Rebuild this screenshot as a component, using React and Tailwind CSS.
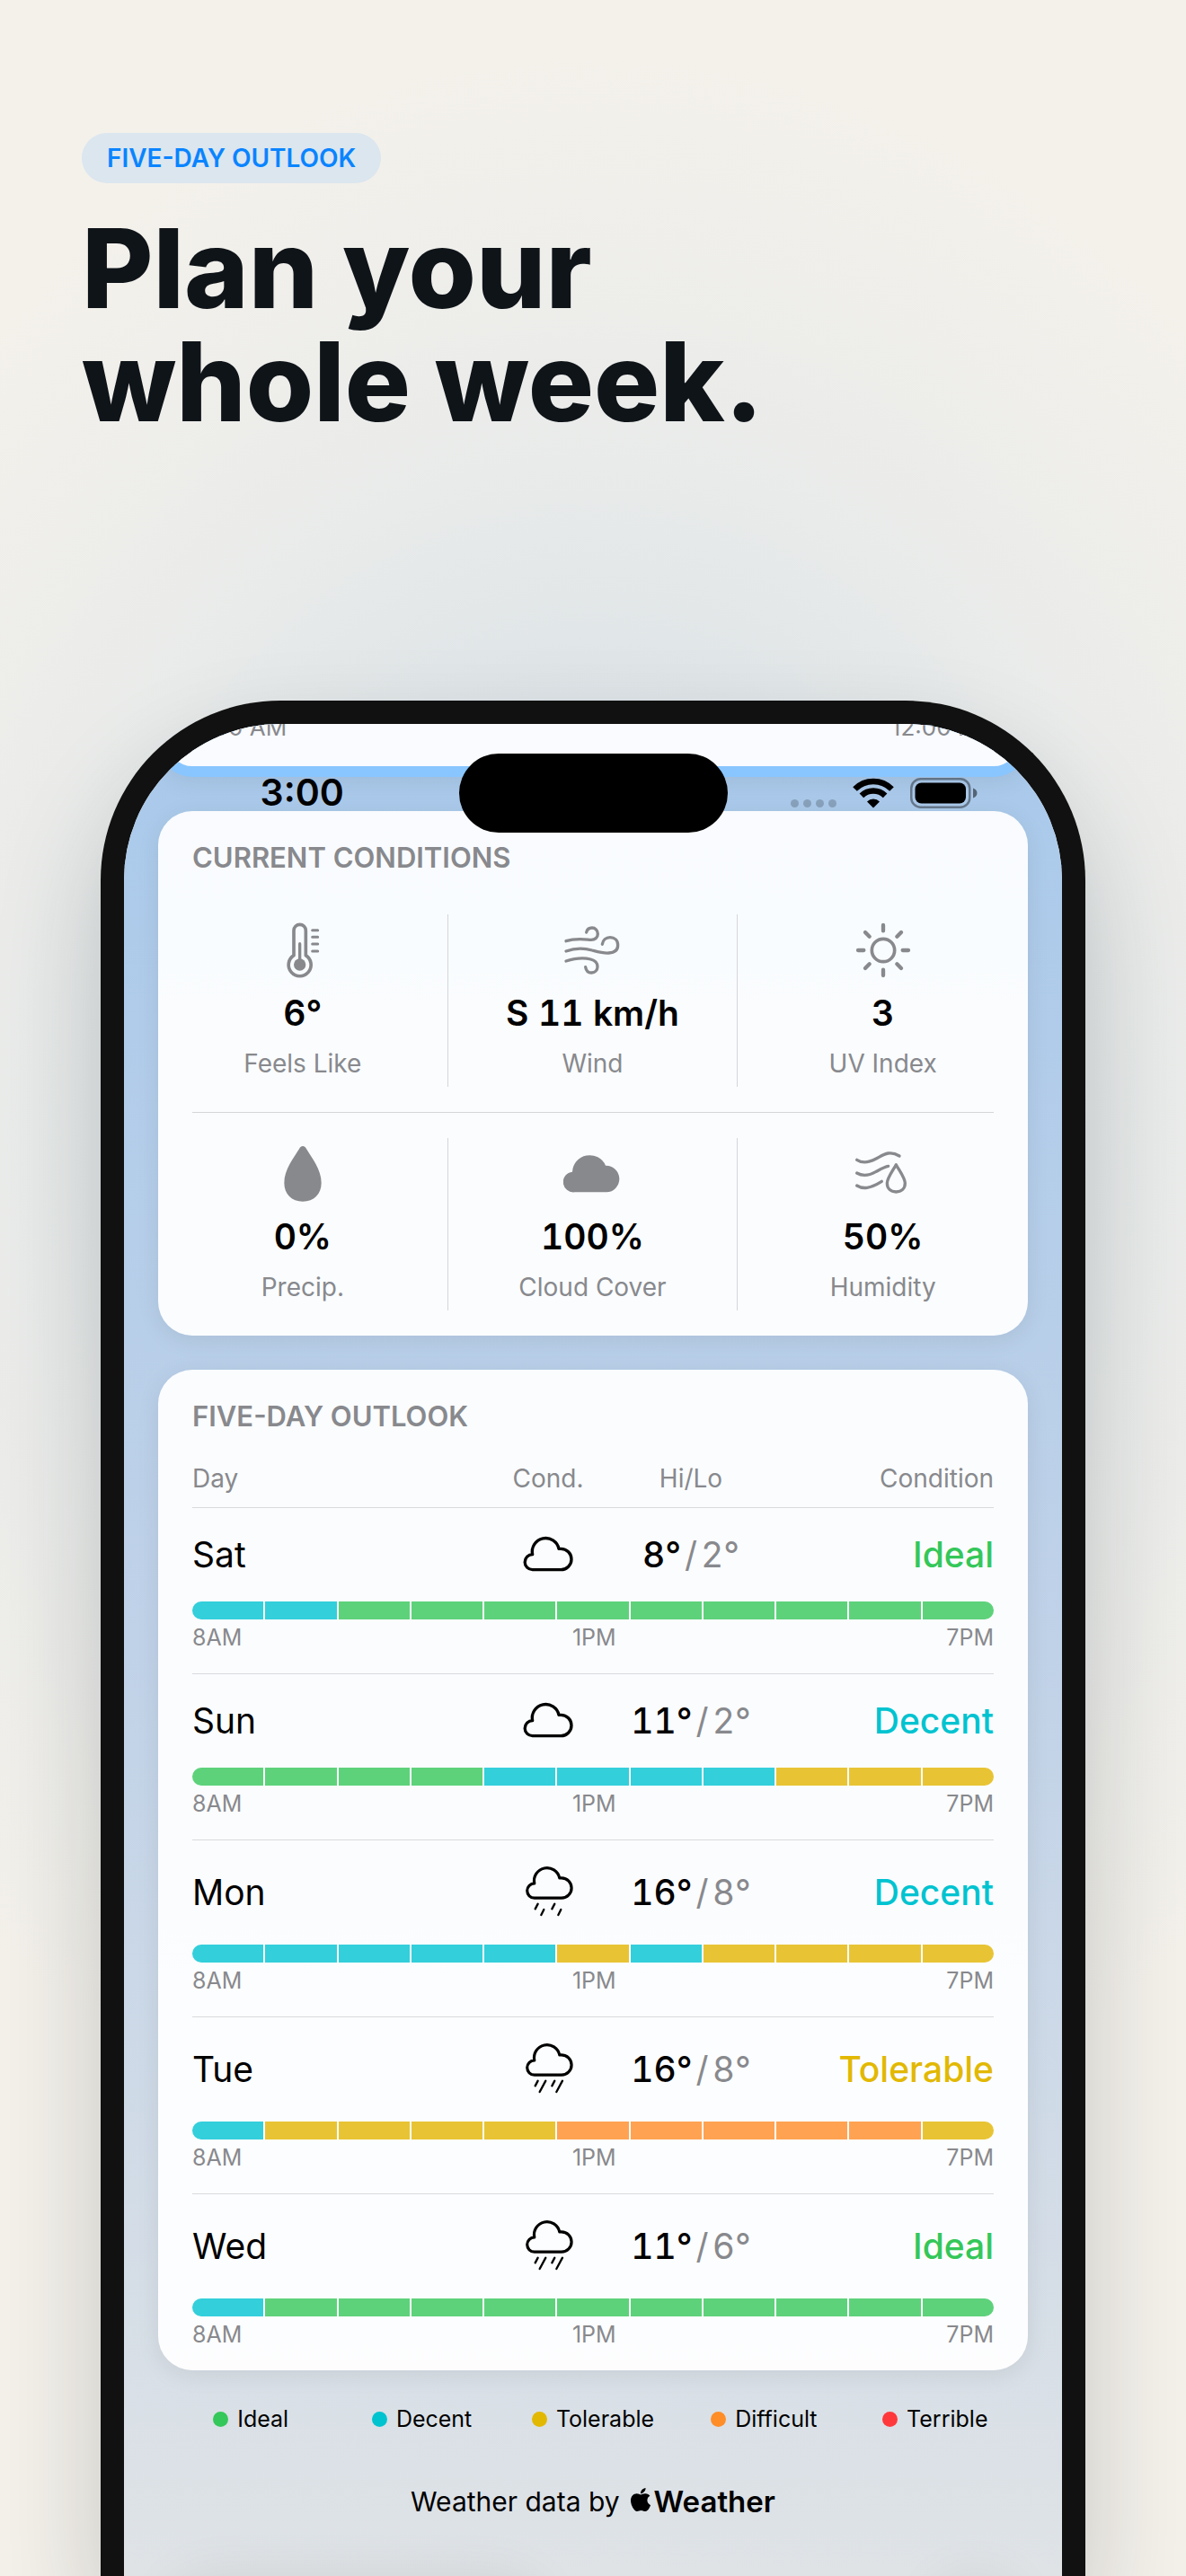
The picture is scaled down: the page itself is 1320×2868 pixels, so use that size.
import { FaApple } from 'react-icons/fa'

const LEVELS = {
    ideal: { label: 'Ideal', text: 'text-[#34c759]', dot: 'bg-[#34c759]', bar: 'bg-[#5dd27b]' },
    decent: { label: 'Decent', text: 'text-[#00c3d0]', dot: 'bg-[#00c3d0]', bar: 'bg-[#33cfdb]' },
    tolerable: { label: 'Tolerable', text: 'text-[#e2b802]', dot: 'bg-[#e2b802]', bar: 'bg-[#e8c434]' },
    difficult: { label: 'Difficult', text: 'text-[#ff8d28]', dot: 'bg-[#ff8d28]', bar: 'bg-[#ffa352]' },
    terrible: { label: 'Terrible', text: 'text-[#ff383c]', dot: 'bg-[#ff383c]', bar: 'bg-[#ff6063]' },
}

// One letter per hour, 8AM to 6PM
const HOUR_CODES = { i: 'ideal', d: 'decent', t: 'tolerable', f: 'difficult', x: 'terrible' }

const DAYS = [
    { day: 'Sat', icon: CloudIcon, hi: 8, lo: 2, level: 'ideal', hours: 'ddiiiiiiiii' },
    { day: 'Sun', icon: CloudIcon, hi: 11, lo: 2, level: 'decent', hours: 'iiiiddddttt' },
    { day: 'Mon', icon: RainIcon, hi: 16, lo: 8, level: 'decent', hours: 'dddddtdtttt' },
    { day: 'Tue', icon: HeavyRainIcon, hi: 16, lo: 8, level: 'tolerable', hours: 'dttttffffft' },
    { day: 'Wed', icon: HeavyRainIcon, hi: 11, lo: 6, level: 'ideal', hours: 'diiiiiiiiii' },
]

const CONDITIONS = [
    [
        { label: 'Feels Like', value: '6°', icon: ThermometerIcon },
        { label: 'Wind', value: 'S 11 km/h', icon: WindIcon },
        { label: 'UV Index', value: '3', icon: SunIcon },
    ],
    [
        { label: 'Precip.', value: '0%', icon: DropIcon },
        { label: 'Cloud Cover', value: '100%', icon: CloudFillIcon },
        { label: 'Humidity', value: '50%', icon: HumidityIcon },
    ],
]

export default function App() {
    return (
        <main className="flex min-h-screen flex-col overflow-hidden bg-[#f4f1eb] bg-[radial-gradient(ellipse_76%_42%_at_50%_44%,#cfdbe3_0%,#dee4e7_40%,#e9ebea_62%,#f4f1eb_100%)] font-['Inter','Liberation_Sans',sans-serif]">
            <header className="flex flex-col items-start px-[91px] pt-[148px]">
                <p className="flex h-14 items-center rounded-full bg-[#dbe6ef] px-7 text-[28px] font-semibold text-[#0a84ff]">
                    FIVE-DAY OUTLOOK
                </p>
                <h1 className="mt-8 text-[122px] leading-[126px] font-extrabold text-[#0f1419]">
                    Plan your
                    <br />
                    whole week.
                </h1>
            </header>
            <Phone />
        </main>
    )
}

function Phone() {
    return (
        <div className="mx-28 mt-[292px] flex grow flex-col rounded-t-[200px] border-[26px] border-b-0 border-[#111111] shadow-[0_60px_120px_rgba(20,28,34,0.2)]">
            <div className="relative grow overflow-hidden rounded-t-[174px] bg-linear-to-b from-[#a9c9eb] via-[#c0d2e8] to-[#dfe3e6] px-[38px]">
                <StatusBar />
                <div className="flex flex-col gap-[38px]">
                    <section className="-mt-12 flex justify-between rounded-[38px] border-12 border-[#89c6ff] bg-[#f9fbff] px-[26px] pt-6 pb-[27px] text-[26px] leading-8 text-[#88898d] shadow-[0_5px_26px_rgba(0,0,0,0.08)]">
                        <span>6:00 AM</span>
                        <span>12:00 PM</span>
                    </section>
                    <CurrentConditions />
                    <Outlook />
                    <Legend />
                </div>
                <p className="mt-[52px] flex items-center justify-center pb-12 text-[30px] leading-12 text-black">
                    Weather data by
                    <a href="#attribution" className="ml-2 flex items-center text-[33px] font-semibold">
                        <FaApple size={30} className="mb-1" />
                        Weather
                    </a>
                </p>
                {/* Tab bar and add button sit just past the fold, only their shadows show */}
                <div className="absolute top-full left-12 h-24 w-[420px] rounded-full shadow-[0_0_60px_rgba(0,0,0,0.07)]" />
                <div className="absolute top-full right-12 size-24 rounded-full shadow-[0_0_60px_rgba(0,0,0,0.07)]" />
            </div>
        </div>
    )
}

function StatusBar() {
    return (
        <div className="absolute inset-x-0 top-[33px] z-10 grid grid-cols-[1fr_299px_1fr] items-center text-black">
            <span className="pl-6 text-center text-[41px] font-semibold">3:00</span>
            <div className="h-[88px] rounded-full bg-black" />
            <div className="flex items-end justify-center gap-[18px] pr-6">
                <div className="flex gap-[5px] pb-px">
                    {[0, 1, 2, 3].map((n) => (
                        <span key={n} className="size-[9px] rounded-full bg-black/20" />
                    ))}
                </div>
                <svg width="46" height="34" viewBox="0 0 46 34" fill="none" stroke="currentColor" strokeWidth="6.5">
                    <path d="M2.5 12.5A29 29 0 0 1 43.5 12.5" />
                    <path d="M9.9 19.9A18.5 18.5 0 0 1 36.1 19.9" />
                    <path d="M23 33.5L16 26.5A9.9 9.9 0 0 1 30 26.5Z" fill="currentColor" stroke="none" />
                </svg>
                <svg width="75" height="34" viewBox="0 0 75 34" fill="currentColor">
                    <rect x="1.25" y="1.25" width="65" height="31.5" rx="10.5" fill="none" stroke="currentColor" strokeWidth="2.5" opacity="0.4" />
                    <rect x="5.5" y="5.5" width="56.5" height="23" rx="7" />
                    <path d="M70 11.5c3 1 4.5 3 4.5 5.5s-1.500 4.500-4.500 5.500z" opacity="0.5" />
                </svg>
            </div>
        </div>
    )
}

function Card({ title, children }) {
    return (
        <section className="rounded-[38px] bg-white/93 pt-[33px] shadow-[0_5px_26px_rgba(0,0,0,0.08)]">
            <h2 className="px-[38px] text-[31px] leading-[38px] font-semibold text-[#88898d]">{title}</h2>
            {children}
        </section>
    )
}

function CurrentConditions() {
    return (
        <Card title="CURRENT CONDITIONS">
            <div className="pt-4">
                {CONDITIONS.map((row, i) => (
                    <div key={i}>
                        {i > 0 && <hr className="mx-[38px] border-[#d4d6da]" />}
                        <dl className="grid grid-cols-3 divide-x divide-[#d4d6da] py-7">
                            {row.map((c) => (
                                <div key={c.label} className="flex flex-col-reverse items-center gap-3 py-2">
                                    <dt className="text-[28px] leading-9 text-[#88898d]">{c.label}</dt>
                                    <dd className="flex flex-col items-center gap-3 text-[39px] leading-[52px] font-semibold text-black tabular-nums">
                                        <c.icon />
                                        {c.value}
                                    </dd>
                                </div>
                            ))}
                        </dl>
                    </div>
                ))}
            </div>
        </Card>
    )
}

function Outlook() {
    return (
        <Card title="FIVE-DAY OUTLOOK">
            <div className="px-[38px] pt-8">
                <table className="w-full table-fixed text-[39px] leading-[52px] text-black">
                    <thead className="text-[28px] leading-9 text-[#88898d]">
                        <tr>
                            <th className="pb-3.5 text-left font-normal">Day</th>
                            <th className="w-26 pb-3.5 font-normal">Cond.</th>
                            <th className="w-[214px] pb-3.5 font-normal">Hi/Lo</th>
                            <th className="w-[230px] pb-3.5 text-right font-normal">Condition</th>
                        </tr>
                    </thead>
                    {DAYS.map((d) => (
                        <DayRows key={d.day} {...d} />
                    ))}
                </table>
            </div>
        </Card>
    )
}

function DayRows({ day, icon: Icon, hi, lo, level, hours }) {
    return (
        <tbody>
            <tr className="border-t border-[#d9dadd]">
                <th className="py-[26px] text-left font-normal">{day}</th>
                <td className="py-[26px]">
                    <Icon />
                </td>
                <td className="py-[26px] text-center whitespace-nowrap tabular-nums">
                    <span className="font-medium">{hi}°</span>
                    <span className="mx-1 text-[#88898d]">/</span>
                    <span className="text-[#88898d]">{lo}°</span>
                </td>
                <td className={`py-[26px] text-right font-medium ${LEVELS[level].text}`}>{LEVELS[level].label}</td>
            </tr>
            <tr>
                <td colSpan={4} className="pb-6">
                    <div className="flex h-5 gap-0.5 overflow-hidden rounded-full">
                        {hours.split('').map((h, i) => (
                            <span key={i} className={`flex-1 ${LEVELS[HOUR_CODES[h]].bar}`} />
                        ))}
                    </div>
                    <div className="mt-1 flex justify-between text-[25px] leading-8 text-[#88898d]">
                        <span>8AM</span>
                        <span>1PM</span>
                        <span>7PM</span>
                    </div>
                </td>
            </tr>
        </tbody>
    )
}

function Legend() {
    return (
        <ul className="grid grid-cols-5 px-2 text-[25px] leading-8 text-black">
            {Object.values(LEVELS).map((l) => (
                <li key={l.label} className="flex items-center justify-center gap-2.5">
                    <span className={`size-[17px] rounded-full ${l.dot}`} />
                    {l.label}
                </li>
            ))}
        </ul>
    )
}

/* Icons */

function Glyph({ viewBox, children }) {
    return (
        <svg
            viewBox={viewBox}
            className="size-16 text-[#88898d]"
            fill="none"
            stroke="currentColor"
            strokeWidth="10"
            strokeLinecap="round"
            strokeLinejoin="round"
        >
            {children}
        </svg>
    )
}

function ThermometerIcon() {
    return (
        <Glyph viewBox="404 141 192 192">
            <path d="M470 171a20 20 0 0 1 40 0V254A37.500 37.500 0 1 1 470 254Z" strokeWidth="11" />
            <path d="M490 215V280" />
            <circle cx="490" cy="285" r="20" fill="currentColor" stroke="none" />
            <path d="M532 170h18M532 193h18M532 216h18M532 240h18" strokeWidth="9" />
        </Glyph>
    )
}

function WindIcon() {
    return (
        <Glyph viewBox="-66 141 192 192">
            <path d="M-57 206C-25 196 0 200 25 202C40 203 49 194 49 182C49 170 40 162 30 162C20 162 13 168 11 177" />
            <path d="M-57 240C-30 230 0 228 30 237C60 245 70 248 86 246C105 245 116 236 116 220C116 204 105 194 90 194C76 194 66 203 64 217" />
            <path d="M-57 273C-25 263 5 262 25 267C42 271 48 282 48 292C48 304 39 312 28 312C18 312 10 305 8 293" />
        </Glyph>
    )
}

function SunIcon() {
    return (
        <Glyph viewBox="904 141 192 192">
            <circle cx="1000" cy="237" r="38" strokeWidth="11" />
            <path
                d="M1000 153v19M1000 302v19M916 237h19M1065 237h19M940 177l14 14M1046 283l14 14M940 297l14-14M1046 191l14-14"
                strokeWidth="13"
            />
        </Glyph>
    )
}

function DropIcon() {
    return (
        <Glyph viewBox="404 889 192 192">
            <path
                d="M500 892c5 0 8 3 10 6C530 932 562 970 562 1015C562 1053 537 1077 500 1077C463 1077 438 1053 438 1015C438 970 470 932 490 898c2-3 5-6 10-6z"
                fill="currentColor"
                stroke="none"
            />
        </Glyph>
    )
}

function CloudFillIcon() {
    return (
        <Glyph viewBox="-66 889 192 192">
            <path
                d="M-29 1046A34 34 0 0 1-36 978A58 58 0 0 1 75 957A44.500 44.500 0 0 1 78 1046Z"
                fill="currentColor"
                stroke="none"
            />
        </Glyph>
    )
}

function HumidityIcon() {
    return (
        <Glyph viewBox="904 889 192 192">
            <path d="M912 938C930 950 950 948 975 935C1000 922 1020 904 1054 925" />
            <path d="M912 982C932 994 950 992 975 978C995 967 1005 961 1017 959" />
            <path d="M912 1024C932 1036 955 1035 995 1010" />
            <path d="M1043 954C1035 970 1013 998 1013 1016C1013 1034 1025 1045 1043 1045C1061 1045 1073 1034 1073 1016C1073 998 1051 970 1043 954Z" />
        </Glyph>
    )
}

const CLOUD = 'M1268 713A25 25 0 0 1 1268 662A44.500 44.500 0 0 1 1356 643H1363A35 35 0 0 1 1363 713Z'

function CloudIcon() {
    return (
        <svg viewBox="1224 585 192 156" className="mx-auto h-[52px] w-16" fill="none" stroke="currentColor" strokeWidth="10" strokeLinejoin="round">
            <path d={CLOUD} />
        </svg>
    )
}

function Rain({ drops }) {
    return (
        <svg viewBox="0 0 192 192" className="mx-auto size-16" fill="none" stroke="currentColor" strokeLinecap="round" strokeLinejoin="round">
            <path d={CLOUD} transform="translate(-1158 -565) scale(0.953)" strokeWidth="10" />
            <path d={drops} strokeWidth="7" />
        </svg>
    )
}

function RainIcon() {
    return <Rain drops="M62 134L53 151M82 153L73 171M118 134L109 151M139 153L130 171" />
}

function HeavyRainIcon() {
    return <Rain drops="M62 134L53 151M88 134L68 171M118 134L109 151M144 134L124 171" />
}
